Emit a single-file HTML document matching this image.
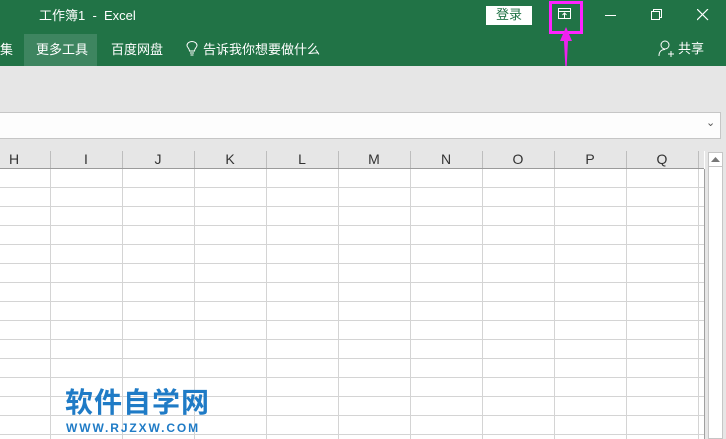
<!DOCTYPE html>
<html><head><meta charset="utf-8"><style>
*{margin:0;padding:0;box-sizing:border-box}
body{width:726px;height:439px;overflow:hidden;background:#fff;font-family:"Liberation Sans","Noto Sans CJK SC",sans-serif;position:relative}
.abs{position:absolute}
.title{left:0;top:0;width:726px;height:33px;background:#217346}
.rib{left:0;top:33px;width:726px;height:33px;background:#217346}
.w{color:#fff;font-size:13px}
.gray{left:0;top:66px;width:726px;height:85px;background:#e6e6e6}
.fbar{left:0;top:112px;width:721px;height:27px;background:#fdfdfd;border:1px solid #c6c6c6;border-left:none}
.hdr{left:0;top:151px;width:704px;height:18px;background:#e6e6e6;border-bottom:1px solid #9b9b9b}
.grid{left:0;top:169px;width:705px;height:270px;border-right:1px solid #a0a0a0;
background-image:linear-gradient(to right,#d4d4d4 1px,transparent 1px),linear-gradient(to bottom,#d4d4d4 1px,transparent 1px);
background-size:72px 19px;background-position:50px 18px}
.col{top:150px;height:17px;width:72px;text-align:center;font-size:14px;color:#333;line-height:19px}
.sep{top:151px;width:1px;height:17px;background:#bdbdbd}
</style></head><body>
<div class="abs title"></div>
<div class="abs rib"></div>
<div class="abs w" style="left:39px;top:5px">工作簿1&nbsp; - &nbsp;Excel</div>
<div class="abs" style="left:486px;top:6px;width:46px;height:19px;background:#fff;color:#217346;font-size:13px;text-align:center;line-height:18px">登录</div>
<div class="abs" style="left:549px;top:1px;width:34px;height:33px;border:3px solid #ff22ff"></div>
<svg class="abs" style="left:558px;top:8px" width="14" height="12"><rect x="0.5" y="0.5" width="12" height="10" fill="none" stroke="#fff"/><line x1="0.5" y1="3.5" x2="12.5" y2="3.5" stroke="#fff"/><path d="M6.5 10V5M4.5 7l2-2 2 2" stroke="#fff" fill="none"/></svg>
<svg class="abs" style="left:556px;top:27px" width="20" height="54"><path d="M10 0L4 14H8L10 53L12 14H16Z" fill="#ee22ee"/></svg>
<div class="abs" style="left:605px;top:15px;width:11px;height:1px;background:#fff"></div>
<svg class="abs" style="left:651px;top:9px" width="12" height="12"><rect x="0.5" y="2.5" width="8" height="8" fill="none" stroke="#fff"/><path d="M2.5 2.5V0.5H10.5V8.5H8.5" fill="none" stroke="#fff"/></svg>
<svg class="abs" style="left:697px;top:9px" width="12" height="12"><path d="M0 0L11 11M11 0L0 11" stroke="#fff" stroke-width="1.2"/></svg>
<div class="abs w" style="left:0;top:39px">集</div>
<div class="abs" style="left:24px;top:34px;width:73px;height:32px;background:#3e8560"></div>
<div class="abs w" style="left:36px;top:39px">更多工具</div>
<div class="abs w" style="left:111px;top:39px">百度网盘</div>
<svg class="abs" style="left:186px;top:41px" width="12" height="16"><path d="M3.5 10C3.5 7 1 6.5 1 4.5A5 4 0 0 1 11 4.5C11 6.5 8.5 7 8.5 10ZM4 12H8M4.5 14H7.5" fill="none" stroke="#fff"/></svg>
<div class="abs w" style="left:203px;top:39px">告诉我你想要做什么</div>
<svg class="abs" style="left:658px;top:40px" width="18" height="18"><circle cx="7" cy="5" r="4" fill="none" stroke="#fff"/><path d="M1 16C1 11 4 9.5 7 9.5M10 14H16M13 11V17" stroke="#fff" fill="none"/></svg>
<div class="abs w" style="left:678px;top:38px">共享</div>
<div class="abs gray"></div>
<div class="abs fbar"></div>
<div class="abs" style="left:706px;top:116px;color:#555;font-size:11px">⌄</div>
<div class="abs hdr"></div>
<div class="abs grid"></div>
<div class="abs col" style="left:-22px">H</div>
<div class="abs col" style="left:50px">I</div>
<div class="abs col" style="left:122px">J</div>
<div class="abs col" style="left:194px">K</div>
<div class="abs col" style="left:266px">L</div>
<div class="abs col" style="left:338px">M</div>
<div class="abs col" style="left:410px">N</div>
<div class="abs col" style="left:482px">O</div>
<div class="abs col" style="left:554px">P</div>
<div class="abs col" style="left:626px">Q</div>
<div class="abs sep" style="left:50px"></div><div class="abs sep" style="left:122px"></div><div class="abs sep" style="left:194px"></div><div class="abs sep" style="left:266px"></div><div class="abs sep" style="left:338px"></div><div class="abs sep" style="left:410px"></div><div class="abs sep" style="left:482px"></div><div class="abs sep" style="left:554px"></div><div class="abs sep" style="left:626px"></div><div class="abs sep" style="left:698px"></div>
<div class="abs" style="left:705px;top:151px;width:21px;height:288px;background:#e6e6e6"></div>
<div class="abs" style="left:708px;top:152px;width:15px;height:287px;background:#fff;border:1px solid #c6c6c6"></div>
<div class="abs" style="left:708px;top:152px;width:15px;height:15px;border:1px solid #c6c6c6;background:#fff"></div>
<svg class="abs" style="left:711px;top:157px" width="9" height="5"><path d="M0 5L4.5 0L9 5Z" fill="#777"/></svg>
<div class="abs" style="left:65px;top:388px;font-size:28px;font-weight:bold;color:#1f7bc6;letter-spacing:1px;line-height:30px">软件自学网</div>
<div class="abs" style="left:66px;top:421px;font-size:12px;font-weight:bold;color:#1f7bc6;letter-spacing:1.9px;line-height:14px">WWW.RJZXW.COM</div>
</body></html>
